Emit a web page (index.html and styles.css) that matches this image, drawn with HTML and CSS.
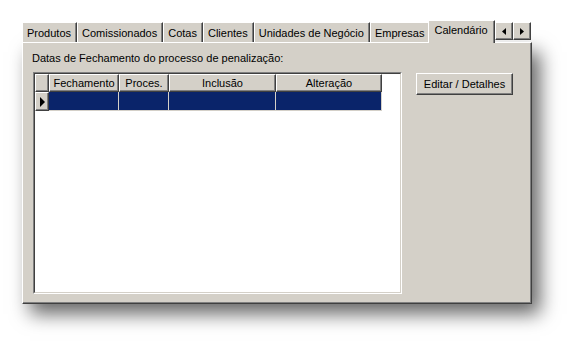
FILE: index.html
```html
<!DOCTYPE html>
<html lang="pt">
<head>
<meta charset="utf-8">
<title>Calendário</title>
<link rel="stylesheet" href="styles.css">
</head>
<body>
<div class="window">
  <div class="tabs">
    <div class="tab">Produtos</div>
    <div class="tab">Comissionados</div>
    <div class="tab">Cotas</div>
    <div class="tab">Clientes</div>
    <div class="tab">Unidades de Negócio</div>
    <div class="tab">Empresas</div>
    <div class="tab tab-active">Calendário</div>
    <div class="scroll">
      <div class="scroll-btn">
        <svg width="4" height="7" viewBox="0 0 4 7"><path d="M4 0V7L0 3.5Z" fill="#000"/></svg>
      </div>
      <div class="scroll-btn">
        <svg width="4" height="7" viewBox="0 0 4 7"><path d="M0 0V7L4 3.5Z" fill="#000"/></svg>
      </div>
    </div>
  </div>
  <div class="panel">
    <div class="label">Datas de Fechamento do processo de penalização:</div>
    <div class="content">
      <div class="grid">
        <div class="grid-inner">
          <div class="row head">
            <div class="cell hcell col-ind"></div>
            <div class="cell hcell col-fech">Fechamento</div>
            <div class="cell hcell col-proc">Proces.</div>
            <div class="cell hcell col-incl">Inclusão</div>
            <div class="cell hcell col-alt">Alteração</div>
          </div>
          <div class="row data">
            <div class="cell hcell col-ind ind">
              <svg width="5" height="10" viewBox="0 0 5 10"><path d="M0 0V10L5 5Z" fill="#000"/></svg>
            </div>
            <div class="cell dcell col-fech"></div>
            <div class="cell dcell col-proc"></div>
            <div class="cell dcell col-incl"></div>
            <div class="cell dcell col-alt"></div>
          </div>
        </div>
      </div>
      <button class="btn">Editar / Detalhes</button>
    </div>
  </div>
</div>
</body>
</html>
```
FILE: styles.css
```css
html, body {
  margin: 0;
  padding: 0;
  background: #ffffff;
}
body {
  font-family: "Liberation Sans", Arial, sans-serif;
  font-size: 11px;
  color: #000;
  min-height: 346px;
}
.window {
  width: 510px;
  margin: 20px 0 0 22px;
}
.tabs {
  display: flex;
  align-items: flex-end;
  height: 22px;
}
.tab {
  flex: none;
  box-sizing: border-box;
  height: 20px;
  padding: 0 5px 0 4px;
  line-height: 20px;
  white-space: nowrap;
  background: #d4d0c8;
  border-top: 1px solid #ffffff;
  border-left: 1px solid #ffffff;
  border-right: 1px solid #404040;
  box-shadow: inset -1px 0 0 #808080;
}
.tab-active {
  position: relative;
  z-index: 2;
  height: 23px;
  margin: 0 -2px -1px -2px;
  padding: 0 6px 0 5px;
  line-height: 18px;
}
.scroll {
  flex: none;
  display: flex;
  align-self: flex-start;
  margin: 2px 1px 0 auto;
}
.scroll-btn {
  box-sizing: border-box;
  width: 18px;
  height: 18px;
  display: flex;
  align-items: center;
  justify-content: center;
  background: #d4d0c8;
  border: 1px solid;
  border-color: #ffffff #404040 #404040 #ffffff;
  box-shadow: inset -1px -1px 0 #808080;
}
.panel {
  box-sizing: border-box;
  width: 510px;
  height: 262px;
  background: #d4d0c8;
  border-top: 1px solid #ffffff;
  border-left: 1px solid #ffffff;
  border-right: 1px solid #404040;
  border-bottom: 1px solid #404040;
  padding: 9px 16px 7px 10px;
  box-shadow: inset -1px -1px 0 #808080, 8px 10px 18px rgba(0, 0, 0, 0.6);
}
.label {
  height: 13px;
  line-height: 13px;
  margin-left: -1px;
  white-space: nowrap;
}
.content {
  display: flex;
  align-items: flex-start;
  gap: 14px;
  margin-top: 7px;
}
.grid {
  box-sizing: border-box;
  width: 369px;
  height: 222px;
  border: 1px solid;
  border-color: #808080 #ffffff #ffffff #808080;
}
.grid-inner {
  box-sizing: border-box;
  height: 100%;
  background: #ffffff;
  border: 1px solid;
  border-color: #404040 #d4d0c8 #d4d0c8 #404040;
}
.row {
  display: flex;
}
.cell {
  box-sizing: border-box;
  flex: none;
  white-space: nowrap;
  text-align: center;
  overflow: hidden;
}
.head .cell {
  height: 18px;
  line-height: 16px;
}
.hcell {
  background: #d4d0c8;
  border-top: 1px solid #ffffff;
  border-left: 1px solid #ffffff;
  border-right: 1px solid #404040;
  border-bottom: 1px solid #404040;
  box-shadow: inset -1px -1px 0 #808080;
}
.data .cell {
  height: 19px;
}
.ind {
  display: flex;
  align-items: center;
  justify-content: center;
}
.dcell {
  background: #0a246a;
  border-right: 1px solid #d4d0c8;
  border-bottom: 1px solid #d4d0c8;
}
.col-ind { width: 14px; }
.col-fech { width: 70px; }
.col-proc { width: 50px; }
.col-incl { width: 107px; }
.col-alt { width: 106px; }
.btn {
  box-sizing: border-box;
  width: 97px;
  height: 22px;
  margin-top: 1px;
  padding: 0;
  font-family: "Liberation Sans", Arial, sans-serif;
  font-size: 11px;
  color: #000;
  background: #d4d0c8;
  border: 1px solid;
  border-color: #ffffff #404040 #404040 #ffffff;
  box-shadow: inset -1px -1px 0 #808080;
}
```
